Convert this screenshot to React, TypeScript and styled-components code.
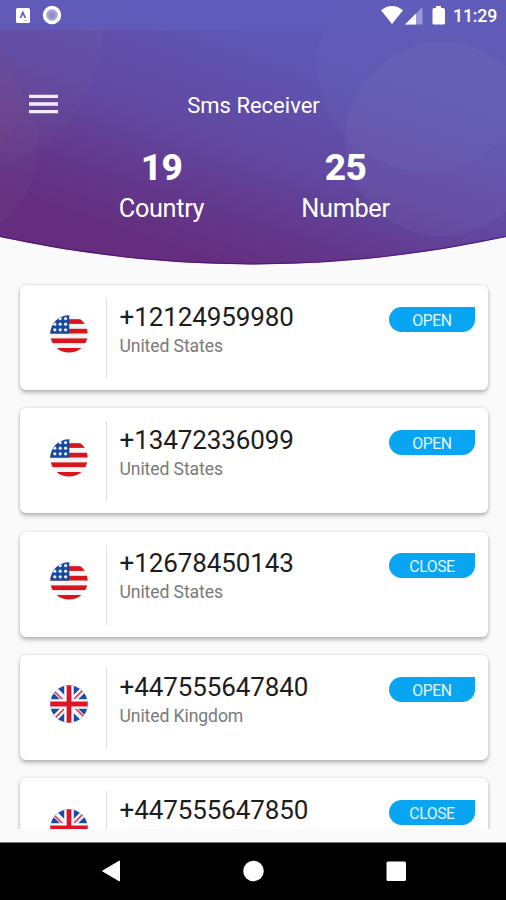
import React, { useId } from "react";
import styled, { createGlobalStyle } from "styled-components";

const GlobalStyle = createGlobalStyle`
  * { box-sizing: border-box; }
  body { margin: 0; background: #fafafa; font-family: Roboto, "Liberation Sans", sans-serif; }
`;

const Screen = styled.div`
  width: 506px;
  height: 900px;
  display: flex;
  flex-direction: column;
  overflow: hidden;
  background: #fafafa;
`;

const Header = styled.header`
  position: relative;
  height: 266px;
  flex: none;
  color: #fff;
`;

const Backdrop = styled.svg`
  position: absolute;
  inset: 0;
  display: block;
`;

const HeaderContent = styled.div`
  position: relative;
  display: flex;
  flex-direction: column;
`;

const StatusBar = styled.div`
  height: 30px;
  display: flex;
  align-items: center;
  justify-content: space-between;
  background: rgba(96, 92, 187, 0.8);
`;

const StatusText = styled.span`
  width: 45px;
  font-size: 17.8px;
  font-weight: 500;
  line-height: 20px;
  letter-spacing: -0.2px;
  margin-top: 2px;
  margin-right: 8px;
  white-space: nowrap;
`;

const StatusGroup = styled.div`
  display: flex;
  align-items: center;
`;

const TitleBar = styled.div`
  height: 48px;
  margin-top: 51px;
  padding-left: 29px;
  display: grid;
  grid-template-columns: 29px 391px;
  align-items: start;
`;

const MenuButton = styled.button`
  border: 0;
  padding: 0;
  margin-top: 13px;
  height: 20px;
  background: none;
`;

const MenuIcon = styled.svg`
  display: block;
`;

const Title = styled.h1`
  margin: 12px 0 0;
  font-size: 22px;
  font-weight: 400;
  line-height: 26px;
  text-align: center;
`;

const Stats = styled.div`
  display: grid;
  grid-template-columns: 184px 184px;
  justify-content: center;
  margin-top: 17px;
`;

const Stat = styled.div`
  text-align: center;
`;

const StatValue = styled.div`
  font-size: 37px;
  font-weight: 800;
  line-height: 44px;
  letter-spacing: -0.6px;
  padding-left: 1px;
`;

const StatLabel = styled.div`
  font-size: 25.3px;
  line-height: 30px;
  letter-spacing: -0.35px;
  margin-top: 4px;
  padding-left: 1px;
`;

const List = styled.main`
  height: 563px;
  flex: none;
  overflow: hidden;
  padding: 19px 18px 0 20px;
  display: flex;
  flex-direction: column;
  gap: 18.35px;
`;

const Card = styled.article`
  height: 105px;
  flex: none;
  border-radius: 6px;
  background: #fff;
  box-shadow: 0 3px 4px rgba(0, 0, 0, 0.24), 0 0 3px rgba(0, 0, 0, 0.15);
  display: grid;
  grid-template-columns: 87px 262px 87px;
  align-items: start;
`;

const FlagCell = styled.div`
  height: 80px;
  margin-top: 13px;
  padding: 17.4px 0 0 30px;
  border-right: 1px solid #e0e0e0;
`;

const Details = styled.div`
  padding: 15.6px 0 0 12.5px;
`;

const Phone = styled.div`
  font-size: 26px;
  line-height: 32px;
  letter-spacing: -0.1px;
  color: #1d1d1d;
`;

const Country = styled.div`
  margin-top: 1px;
  font-size: 17.6px;
  line-height: 24px;
  letter-spacing: -0.1px;
  color: #7a7a7a;
`;

const Action = styled.button`
  width: 86px;
  height: 25px;
  margin: 21.6px 0 0 20px;
  padding: 2px 0 0;
  border: 0;
  border-radius: 12.5px 0 12.5px 12.5px;
  background: #08a5f2;
  color: #e4f6ff;
  font: 400 15.8px/23px Roboto, "Liberation Sans", sans-serif;
  letter-spacing: -0.45px;
  text-align: center;
`;

const NavBar = styled.nav`
  margin-top: 13px;
  height: 58px;
  flex: none;
  background: #000;
  border-top: 1px solid #777;
`;

const UsFlag = ({ clip }: { clip: string }) => (
  <g clipPath={`url(#${clip})`}>
    <rect width="38" height="38" fill="#f6f4f5" />
    {[4.2, 13.8, 23.4, 33].map((y) => (
      <rect key={y} y={y} width="38" height="4.7" fill="#d8141c" />
    ))}
    <rect width="19.3" height="18.6" fill="#174a9f" />
    {[3.6, 9.2, 14.8].map((y) =>
      [4.8, 10.2, 15.6].map((x) => (
        <circle key={`${x}-${y}`} cx={x} cy={y} r="1.6" fill="#e8effa" />
      ))
    )}
  </g>
);

const UkFlag = ({ clip }: { clip: string }) => (
  <g clipPath={`url(#${clip})`}>
    <rect width="38" height="38" fill="#1a4ba5" />
    <path d="M1 1 37 37M37 1 1 37" stroke="#f8f5f7" strokeWidth="6.2" />
    <path d="M0 2 17 19M21 19 38 36M38 0 21 17M17 21 0 38" stroke="#d93a48" strokeWidth="1.6" />
    <path d="M19 0V38M0 19H38" stroke="#fff" strokeWidth="9.5" />
    <path d="M19 0V38M0 19H38" stroke="#dc1428" strokeWidth="4.8" />
  </g>
);

const Flag = ({ kind }: { kind: "us" | "uk" }) => {
  const clip = useId();
  return (
    <svg width="38" height="38" viewBox="0 0 38 38" aria-hidden="true">
      <defs>
        <clipPath id={clip}>
          <circle cx="19" cy="19" r="18.7" />
        </clipPath>
      </defs>
      {kind === "us" ? <UsFlag clip={clip} /> : <UkFlag clip={clip} />}
    </svg>
  );
};

type Entry = { phone: string; flag: "us" | "uk"; country?: string; action: string };

const numbers: Entry[] = [
  { phone: "+12124959980", flag: "us", country: "United States", action: "OPEN" },
  { phone: "+13472336099", flag: "us", country: "United States", action: "OPEN" },
  { phone: "+12678450143", flag: "us", country: "United States", action: "CLOSE" },
  { phone: "+447555647840", flag: "uk", country: "United Kingdom", action: "OPEN" },
  { phone: "+447555647850", flag: "uk", action: "CLOSE" },
];

export default function App() {
  return (
    <>
      <GlobalStyle />
      <Screen>
        <Header>
          <Backdrop width="506" height="266" viewBox="0 0 506 266">
            <defs>
              <linearGradient id="sky" gradientUnits="userSpaceOnUse" x1="290" y1="45" x2="215" y2="268">
                <stop offset="0" stopColor="#5f57b5" />
                <stop offset="0.45" stopColor="#6149a2" />
                <stop offset="0.8" stopColor="#633689" />
                <stop offset="1" stopColor="#642d7e" />
              </linearGradient>
              <clipPath id="dome">
                <path d="M0 0H506V237Q253 292 0 237Z" />
              </clipPath>
            </defs>
            <g clipPath="url(#dome)">
              <rect width="506" height="266" fill="url(#sky)" />
              <circle cx="-38" cy="28" r="141" fill="#8b7098" opacity="0.08" />
              <circle cx="-60" cy="145" r="99" fill="#8e6090" opacity="0.1" />
              <circle cx="-44" cy="98" r="66" fill="#8e5085" opacity="0.1" />
              <circle cx="425" cy="64" r="108" fill="#8190c4" opacity="0.07" />
              <circle cx="442" cy="139" r="97" fill="#8d86c0" opacity="0.12" />
            </g>
            <path d="M0 236.5Q253 291.5 506 236.5" fill="none" stroke="#4d0871" strokeOpacity="0.75" />
          </Backdrop>
          <HeaderContent>
            <StatusBar>
              <svg width="70" height="30" viewBox="0 0 70 30">
                <rect x="16" y="8" width="14" height="15" rx="1.5" fill="#fff" />
                <path d="M20.5 18 22.8 12.5 25.3 18" stroke="#625fb0" strokeWidth="1.8" fill="none" />
                <path d="M24.5 20.5H27" stroke="#aaa8d4" />
                <circle cx="52" cy="15" r="7.5" fill="#a8a0d6" stroke="#fff" strokeWidth="3.5" />
                <circle cx="52" cy="15" r="3" fill="#958dca" />
              </svg>
              <StatusGroup>
                <svg width="76" height="30" viewBox="0 0 76 30">
                  <path d="M4 10.3Q15 1.5 26 10.3L15 24Z" fill="#fff" />
                  <path d="M28 24.5 45.5 7V24.5Z" fill="#9b98d5" />
                  <path d="M28 24.5 39 13.5V24.5Z" fill="#fff" />
                  <path d="M57 8H59V6H64V8H66Q68 8 68 10V23Q68 24.5 66 24.5H57Q55.5 24.5 55.5 23V10Q55.5 8 57 8Z" fill="#fff" />
                </svg>
                <StatusText>11:29</StatusText>
              </StatusGroup>
            </StatusBar>
            <TitleBar>
              <MenuButton aria-label="Menu">
                <MenuIcon width="29" height="20" viewBox="0 0 29 20">
                  <path d="M0 2.3H29M0 10H29M0 17.7H29" stroke="#f4ecfb" strokeWidth="3.3" />
                </MenuIcon>
              </MenuButton>
              <Title>Sms Receiver</Title>
            </TitleBar>
            <Stats>
              <Stat>
                <StatValue>19</StatValue>
                <StatLabel>Country</StatLabel>
              </Stat>
              <Stat>
                <StatValue>25</StatValue>
                <StatLabel>Number</StatLabel>
              </Stat>
            </Stats>
          </HeaderContent>
        </Header>
        <List>
          {numbers.map((item) => (
            <Card key={item.phone}>
              <FlagCell>
                <Flag kind={item.flag} />
              </FlagCell>
              <Details>
                <Phone>{item.phone}</Phone>
                {item.country && <Country>{item.country}</Country>}
              </Details>
              <Action>{item.action}</Action>
            </Card>
          ))}
        </List>
        <NavBar>
          <svg width="506" height="56" viewBox="0 0 506 56">
            <path d="M102.5 28 119.5 18V38Z" fill="#fff" stroke="#fff" strokeLinejoin="round" />
            <circle cx="253.5" cy="28" r="10.3" fill="#fff" />
            <rect x="386.5" y="18.5" width="19.5" height="19.5" rx="1.5" fill="#fff" />
          </svg>
        </NavBar>
      </Screen>
    </>
  );
}
